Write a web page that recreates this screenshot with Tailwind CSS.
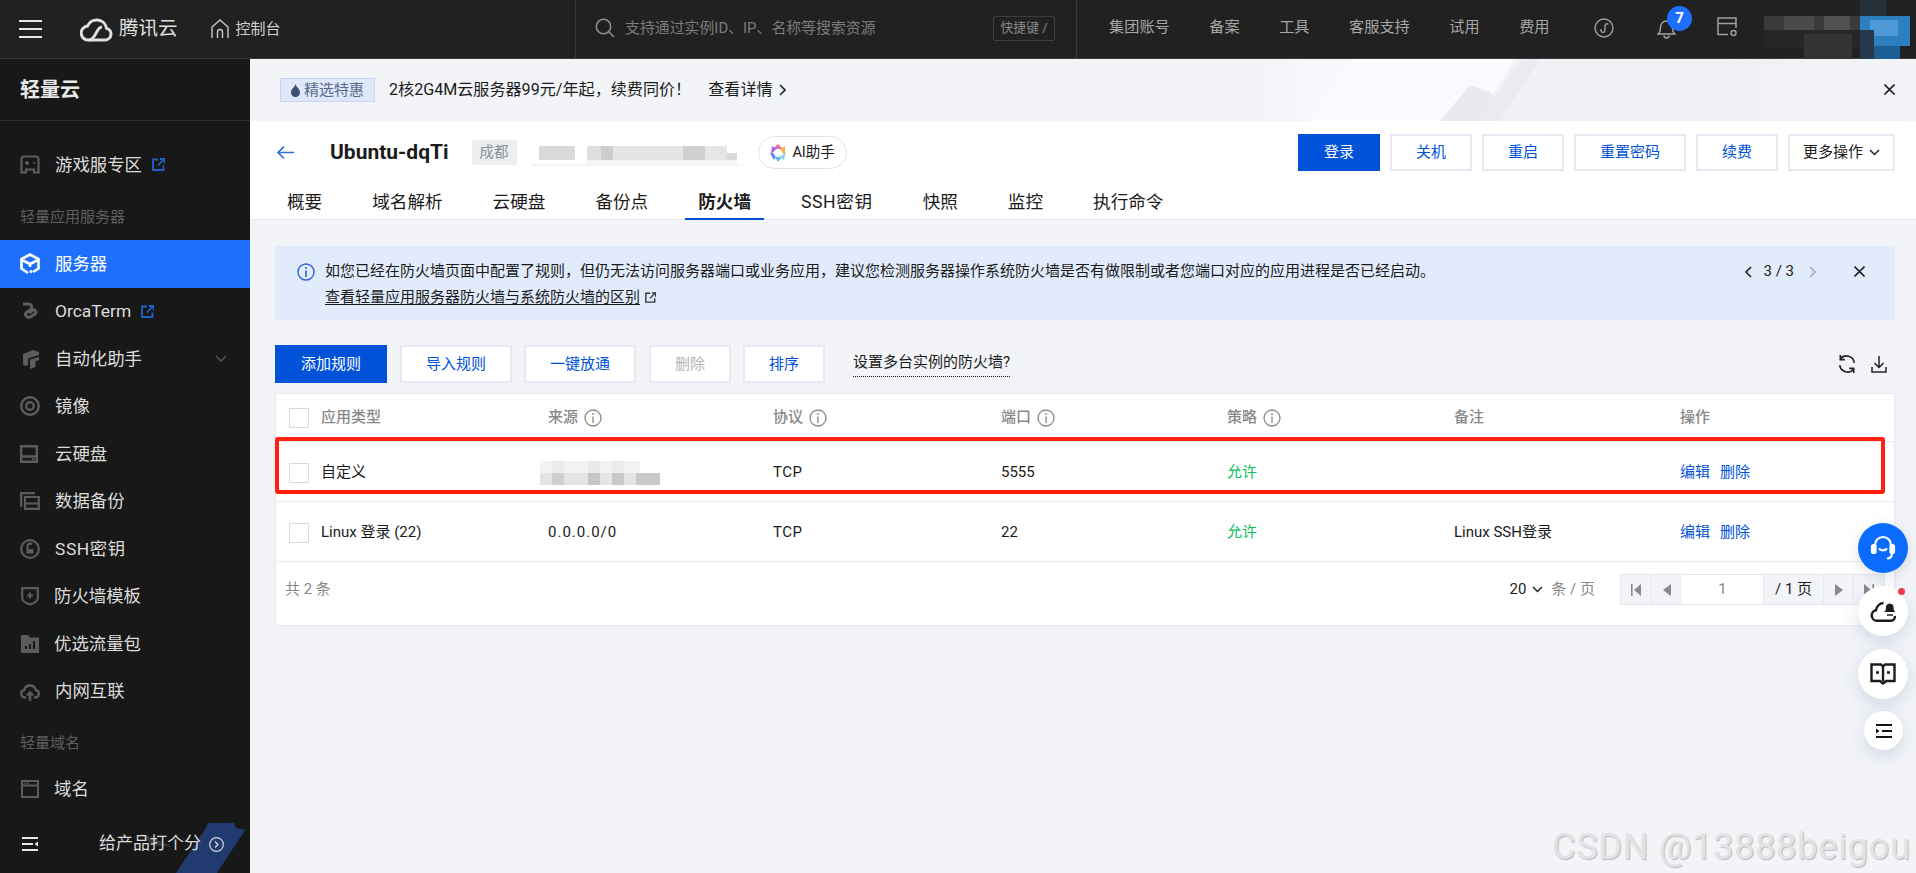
<!DOCTYPE html>
<html lang="zh-CN">
<head>
<meta charset="UTF-8" />
<title>轻量云 - 防火墙</title>
<script src="https://cdn.jsdelivr.net/npm/@tailwindcss/browser@4"></script>
</head>
<body class="bg-[#f2f4f8]">
<div class="relative flex h-[873px] w-[1916px] flex-col overflow-hidden font-['Roboto','Noto_Sans_CJK_SC',sans-serif] text-[15px] text-[#1b1b1b]">

  <!-- top bar -->
  <header class="relative flex h-[59px] shrink-0 items-center border-b border-[#3a3a3a] bg-[#212121] text-[#a6a6a6]">
    <div class="flex w-[575px] items-center">
      <svg class="ml-[19px] h-[18px] w-[23px]" viewBox="0 0 23 18" fill="#e8e8e8"><rect width="23" height="2"/><rect y="8" width="23" height="2"/><rect y="16" width="23" height="2"/></svg>
      <svg class="ml-[38px] h-[28px] w-[33px]" viewBox="0 0 33 28" fill="none" stroke="#e0e0e0" stroke-width="3"><path d="M9 25h16a6 6 0 0 0 1.500-11.800A10 10 0 0 0 7.500 11 7 7 0 0 0 9 25Z"/><path d="M9 25 C16 25 16 12 22 12"/></svg>
      <span class="ml-[6px] text-[19.500px] text-[#e0e0e0]">腾讯云</span>
      <svg class="ml-[33px] h-[20px] w-[18px]" viewBox="0 0 18 20" fill="none" stroke="#c8c8c8" stroke-width="1.400"><path d="M1 19V8L9 1l8 7v11"/><path d="M6.500 19v-6a2.500 2.500 0 0 1 5 0v6"/></svg>
      <span class="ml-[7px] text-[15px] text-[#d0d0d0]">控制台</span>
    </div>
    <div class="flex h-full w-[501px] items-center border-l border-[#3a3a3a] pb-[2px] pl-[19px]">
      <svg class="h-[20px] w-[20px]" viewBox="0 0 20 20" fill="none" stroke="#8c8c8c" stroke-width="1.600"><circle cx="8.500" cy="8.500" r="7.200"/><path d="m14 14 5 5"/></svg>
      <span class="ml-[10px] w-[368px] text-[14.900px] text-[#7c7c7c]">支持通过实例ID、IP、名称等搜索资源</span>
      <span class="flex h-[25px] w-[62px] items-center justify-center rounded-[2px] border border-[#3f3f3f] text-[12.800px] text-[#8a8a8a]">快捷键 /</span>
    </div>
    <nav class="flex h-full flex-1 items-center gap-[39.500px] border-l border-[#3a3a3a] pb-[3px] pl-[32px] text-[15.200px]">
      <span>集团账号</span><span>备案</span><span>工具</span><span>客服支持</span><span>试用</span><span>费用</span>
      <svg class="ml-[5px] h-[20px] w-[20px]" viewBox="0 0 20 20" fill="none" stroke="#a0a0a0" stroke-width="1.400"><circle cx="10" cy="10" r="9"/><path d="M7 11v1.500a2 2 0 0 0 3 1.600c1-.6 1-1.400 1-2.600V8.500c0-1.200.2-2 1-2.500a2 2 0 0 1 2.400.4"/></svg>
      <svg class="ml-[3px] h-[24px] w-[19px]" viewBox="0 0 19 24" fill="none" stroke="#a0a0a0" stroke-width="1.500"><path d="M1 18c2-1.500 2.500-3 2.500-7a6 6 0 0 1 12 0c0 4 .5 5.500 2.500 7Z"/><path d="M7 19.500a2.500 2.500 0 0 0 5 0"/></svg>
      <svg class="ml-[2px] h-[21px] w-[21px]" viewBox="0 0 21 21" fill="none" stroke="#a0a0a0" stroke-width="1.500"><path d="M11 17.500H1V1h18v10M1 6.500h18"/><circle cx="16.500" cy="16" r="2.500"/></svg>
    </nav>
    <span class="absolute left-[1667px] top-[6px] flex h-[25px] w-[25px] items-center justify-center rounded-full bg-[#1f6fff] text-[15px] font-bold text-white">7</span>
    <!-- blurred account name -->
    <svg class="absolute left-[1764px] top-0 h-[62px] w-[146px]" viewBox="0 0 146 62">
      <rect x="0" y="16" width="96" height="14" fill="#3a3a3a"/><rect x="20" y="16" width="30" height="14" fill="#4a4a4a"/><rect x="60" y="16" width="26" height="14" fill="#505050"/><rect x="0" y="30" width="96" height="18" fill="#262626"/><rect x="40" y="34" width="48" height="28" fill="#333"/>
      <rect x="96" y="0" width="26" height="16" fill="#263038"/><rect x="96" y="16" width="50" height="30" fill="#2e7fbf"/><rect x="106" y="20" width="28" height="16" fill="#4f9ad6"/><rect x="96" y="46" width="40" height="16" fill="#1d5f94"/><rect x="96" y="30" width="14" height="30" fill="#243a4c"/>
    </svg>
  </header>

  <div class="flex min-h-0 flex-1">
    <!-- sidebar -->
    <aside class="relative flex w-[250px] shrink-0 flex-col overflow-hidden bg-[#181818] text-[17.400px] text-[#dcdcdc]">
      <div class="flex h-[62px] shrink-0 items-center border-b border-[#2e2e2e] pl-[20px] text-[20px] font-bold text-[#e8e8e8]">轻量云</div>
      <div class="mt-[20px] flex h-[47.500px] shrink-0 items-center pl-[20px]">
        <svg class="h-[20px] w-[20px]" viewBox="0 0 20 20" fill="none" stroke="#5c5c5c" stroke-width="2.200"><path d="M4 1.500h12a2.500 2.500 0 0 1 2.500 2.500v13.500h-4.500v-3H6v3H1.500V4A2.500 2.500 0 0 1 4 1.500Z"/><path d="M5 8h4M7 6v4" stroke-width="1.800"/><circle cx="14" cy="8" r="1" fill="#5c5c5c" stroke="none"/></svg>
        <span class="ml-[15px]">游戏服专区</span>
        <svg class="ml-[10px] h-[13px] w-[13px]" viewBox="0 0 13 13" fill="none" stroke="#1f5fc9" stroke-width="1.800"><path d="M6 1.500H1v10.500h10.500V7.500"/><path d="M6 7.500 12 1M8 1h4.500v4.500"/></svg>
      </div>
      <div class="flex h-[51.500px] shrink-0 items-center pl-[20px] pt-[6px] text-[15px] text-[#5e5e5e]">轻量应用服务器</div>
      <div class="flex h-[47.500px] shrink-0 items-center bg-[#1f6fff] pl-[20px] text-white">
        <svg class="h-[22px] w-[20px]" viewBox="0 0 20 22" fill="none" stroke="#fff" stroke-width="2.600"><path d="M8 20 1.500 15.500V6L10 1.500 18.500 6v9.500L13 19"/><path d="m3 7.500 7 3.500 7-3.500M10 11v3"/><circle cx="11" cy="18.500" r="1.500" fill="#fff" stroke="none"/></svg>
        <span class="ml-[15px]">服务器</span>
      </div>
      <div class="flex h-[47.500px] shrink-0 items-center pl-[20px]">
        <svg class="h-[20px] w-[20px]" viewBox="0 0 20 20" fill="none" stroke="#5c5c5c" stroke-width="3"><path d="M3 3h5c4 0 5 4 2 6L7 11c-3 2-1 6 3 5l5-3c2-2 0-5-2-4l-4 3"/></svg>
        <span class="ml-[15px]">OrcaTerm</span>
        <svg class="ml-[10px] h-[13px] w-[13px]" viewBox="0 0 13 13" fill="none" stroke="#1f5fc9" stroke-width="1.800"><path d="M6 1.500H1v10.500h10.500V7.500"/><path d="M6 7.500 12 1M8 1h4.500v4.500"/></svg>
      </div>
      <div class="flex h-[47.500px] shrink-0 items-center pl-[22px]">
        <svg class="h-[20px] w-[17px]" viewBox="0 0 17 20" fill="#5c5c5c"><path d="M1 5 11 1l6 2v3L6 9.500V16l-3 1-2-1.500Z"/><path d="M8 10.500 17 8v3l-3.500 1.200V18L8 20Z"/></svg>
        <span class="ml-[16px]">自动化助手</span>
        <svg class="ml-[73px] h-[8px] w-[12px]" viewBox="0 0 12 8" fill="none" stroke="#5a5a5a" stroke-width="1.400"><path d="m1 1 5 5 5-5"/></svg>
      </div>
      <div class="flex h-[47.500px] shrink-0 items-center pl-[20px]">
        <svg class="h-[20px] w-[20px]" viewBox="0 0 20 20" fill="none" stroke="#5c5c5c" stroke-width="2.400"><circle cx="10" cy="10" r="8.800"/><circle cx="10" cy="10" r="3.800"/></svg>
        <span class="ml-[15px]">镜像</span>
      </div>
      <div class="flex h-[47.500px] shrink-0 items-center pl-[20px]">
        <svg class="h-[18px] w-[18px]" viewBox="0 0 18 18" fill="none" stroke="#5c5c5c" stroke-width="2.400"><path d="M1.200 1.200h15.600v15.600H1.200ZM1.200 11.500h15.600"/><path d="M12 14.200h2.500" stroke-width="1.600"/></svg>
        <span class="ml-[17px]">云硬盘</span>
      </div>
      <div class="flex h-[47.500px] shrink-0 items-center pl-[20px]">
        <svg class="h-[18px] w-[20px]" viewBox="0 0 20 18" fill="none" stroke="#5c5c5c" stroke-width="2.200"><path d="M15 1.200H1.200V15"/><path d="M5 5h13.800v11.800H5ZM5 11.500h13.800"/></svg>
        <span class="ml-[15px]">数据备份</span>
      </div>
      <div class="flex h-[47.500px] shrink-0 items-center pl-[20px]">
        <svg class="h-[20px] w-[20px]" viewBox="0 0 20 20" fill="none" stroke="#5c5c5c" stroke-width="2.200"><circle cx="10" cy="10" r="8.800"/><path d="M7.500 10V7a2.500 2.500 0 0 1 4.500-1.500"/><rect x="6.500" y="10" width="7" height="4.500" fill="#5c5c5c" stroke="none"/></svg>
        <span class="ml-[15px] tracking-[0.6px]">SSH密钥</span>
      </div>
      <div class="flex h-[47.500px] shrink-0 items-center pl-[21px]">
        <svg class="h-[19px] w-[18px]" viewBox="0 0 18 19" fill="none" stroke="#5c5c5c" stroke-width="2.200"><path d="M1.200 1.200h15.600v10c0 3-4 5-7.800 6.300C5 16.200 1.200 14.200 1.200 11.200Z"/><path d="M9 5.500v6M6 8.500h6"/></svg>
        <span class="ml-[15px]">防火墙模板</span>
      </div>
      <div class="flex h-[47.500px] shrink-0 items-center pl-[21px]">
        <svg class="h-[18px] w-[18px]" viewBox="0 0 18 18" fill="#5c5c5c"><path d="M0 0h7l2 2.500h9V18H0Z"/><path d="M4 11h2v3H4ZM8 9h2v5H8ZM12 6h2v8h-2Z" fill="#181818"/></svg>
        <span class="ml-[15px]">优选流量包</span>
      </div>
      <div class="flex h-[47.500px] shrink-0 items-center pl-[20px]">
        <svg class="h-[20px] w-[20px]" viewBox="0 0 20 20" fill="none" stroke="#5c5c5c" stroke-width="2.400"><path d="M6 16.500H5a3.800 3.800 0 0 1-.8-7.500A6 6 0 0 1 15.800 9 3.800 3.800 0 0 1 15 16.500h-1"/><path d="M10 20v-8M7 14.500l3-3 3 3"/></svg>
        <span class="ml-[15px]">内网互联</span>
      </div>
      <div class="flex h-[50px] shrink-0 items-center pl-[20px] pt-[6px] text-[15px] text-[#5e5e5e]">轻量域名</div>
      <div class="flex h-[47.500px] shrink-0 items-center pl-[21px]">
        <svg class="h-[18px] w-[18px]" viewBox="0 0 18 18" fill="none" stroke="#5c5c5c" stroke-width="2"><path d="M1 1h16v16H1ZM1 5.500h16"/><path d="M3.500 3.200h1.500M6.500 3.200H8" stroke-width="1.500"/></svg>
        <span class="ml-[15px]">域名</span>
      </div>
      <svg class="absolute bottom-0 left-[140px] h-[50px] w-[105px]" viewBox="0 0 105 50"><path d="M0 10 20 18 32 24 12 22Z" fill="#3a3a3a"/><path d="M36 50 66 5l2-5h26l2 5 9 2-28 43Z" fill="#213a70"/></svg>
      <div class="relative mt-auto flex h-[58px] shrink-0 items-center pl-[22px]">
        <svg class="h-[14px] w-[16px]" viewBox="0 0 16 14" fill="#e8e8e8"><rect width="16" height="2"/><rect y="6" width="11" height="2"/><rect y="12" width="16" height="2"/><path d="M16 4.500v5L12.500 7Z"/></svg>
        <span class="ml-[61px] text-[17px]">给产品打个分</span>
        <svg class="ml-[8px] h-[15px] w-[15px]" viewBox="0 0 15 15" fill="none" stroke="#d8d8d8" stroke-width="1.200"><circle cx="7.500" cy="7.500" r="6.800"/><path d="m6 4.500 3 3-3 3"/></svg>
      </div>
    </aside>

    <!-- content -->
    <main class="relative flex min-w-0 flex-1 flex-col">
      <!-- promo -->
      <div class="relative flex h-[62px] shrink-0 items-center overflow-hidden pl-[30px] text-[16.100px]">
        <svg class="absolute left-[1010px] top-0 h-[62px] w-[656px]" viewBox="0 0 656 62"><defs><linearGradient id="promo" x1="0" x2="1"><stop offset="0" stop-color="#f2f4f8"/><stop offset="0.1" stop-color="#f8f9fc"/><stop offset="0.35" stop-color="#f0f1f5"/><stop offset="0.7" stop-color="#eff1f5"/><stop offset="1" stop-color="#f2f4f8"/></linearGradient></defs><rect width="656" height="62" fill="url(#promo)"/><path d="M52 62 90 0h165l-38 62Z" fill="#f9fafd"/><path d="M180 62 210 26 232 34 240 62Z" fill="#e8eaee"/><path d="M218 62 262 0h18l-40 62Z" fill="#e9ebf0"/><path d="M260 62 300 0h120l-34 62Z" fill="#eef0f3"/></svg>
        <span class="relative flex h-[24px] w-[95px] items-center justify-center gap-[4px] border border-[#c9d6f8] bg-[#dfe7fb] text-[15px] text-[#58678c]">
          <svg class="h-[13px] w-[9px]" viewBox="0 0 9 13" fill="#3f4f78"><path d="M4.500 0C5 3 9 5 9 8.500a4.500 4.500 0 0 1-9 0C0 5 4 3 4.500 0Z"/></svg>精选特惠</span>
        <span class="relative ml-[14px]">2核2G4M云服务器99元/年起，续费同价！</span>
        <span class="relative ml-[17px] flex items-center gap-[6px]">查看详情
          <svg class="h-[12px] w-[7px]" viewBox="0 0 7 12" fill="none" stroke="#222" stroke-width="1.600"><path d="m1 1 5 5-5 5"/></svg></span>
        <svg class="absolute left-[1634px] top-[25px] h-[11px] w-[11px]" viewBox="0 0 11 11" stroke="#222" stroke-width="1.600"><path d="m.5.500 10 10M10.500.500l-10 10"/></svg>
      </div>

      <!-- instance header + tabs -->
      <div class="h-[99px] shrink-0 border-b border-[#e8eaf0] bg-white">
        <div class="flex h-[66px] items-center pb-[3px] pl-[27px]">
          <svg class="h-[13px] w-[17px]" viewBox="0 0 17 13" fill="none" stroke="#2f6fe0" stroke-width="1.600"><path d="M17 6.500H1M7 .7 1 6.500l6 5.800"/></svg>
          <span class="ml-[36px] text-[21px] font-bold">Ubuntu-dqTi</span>
          <span class="ml-[23px] flex h-[25px] w-[45px] items-center justify-center rounded-[2px] bg-[#eceef2] text-[14.500px] text-[#8a8f98]">成都</span>
          <svg class="ml-[15px] h-[27px] w-[212px]" viewBox="0 0 212 27"><path d="M0 26h212" stroke="#e8eaf0"/><rect x="7" y="7" width="36" height="14" fill="#d9d9d9"/><rect x="55" y="7" width="14" height="14" fill="#dedede"/><rect x="69" y="7" width="12" height="14" fill="#cdcdcd"/><rect x="81" y="7" width="70" height="14" fill="#e4e5e6"/><rect x="151" y="7" width="22" height="14" fill="#cfd0d2"/><rect x="173" y="7" width="22" height="14" fill="#e6e6e6"/><rect x="195" y="14" width="10" height="7" fill="#d9d9d9"/><rect x="55" y="21" width="150" height="4" fill="#f4f4f4"/></svg>
          <span class="ml-[14px] flex h-[33px] w-[89px] items-center justify-center gap-[5px] rounded-full border border-[#e0e4ef] text-[14.500px]">
            <svg class="h-[18px] w-[18px]" viewBox="0 0 18 18"><path d="M9 0 14 5H4Z" fill="#ec6aa6"/><path d="M3 2 2 10l6-5Z" fill="#9a6ae8"/><path d="M1 9l4 7 3-6Z" fill="#5a7ff0"/><path d="M9 18 5 12h9Z" fill="#62bdf6"/><path d="M15 16l2-8-6 5Z" fill="#8ad0f0"/><path d="M16 2l-6 4 6 5Z" fill="#f6b64c"/><circle cx="9" cy="9" r="4" fill="#fff"/></svg>AI助手</span>
          <div class="ml-auto flex gap-[10px] pr-[21px] text-[15px] text-[#0052d9]">
            <span class="flex h-[37px] w-[82px] items-center justify-center bg-[#0052d9] text-white">登录</span>
            <span class="flex h-[37px] w-[82px] items-center justify-center border-2 border-[#e6e9f2]">关机</span>
            <span class="flex h-[37px] w-[82px] items-center justify-center border-2 border-[#e6e9f2]">重启</span>
            <span class="flex h-[37px] w-[112px] items-center justify-center border-2 border-[#e6e9f2]">重置密码</span>
            <span class="flex h-[37px] w-[82px] items-center justify-center border-2 border-[#e6e9f2]">续费</span>
            <span class="flex h-[37px] w-[107px] items-center justify-center gap-[6px] border-2 border-[#e6e9f2] text-[#1b1b1b]">更多操作
              <svg class="h-[7px] w-[11px]" viewBox="0 0 11 7" fill="none" stroke="#222" stroke-width="1.500"><path d="m1 1 4.500 4.500L10 1"/></svg></span>
          </div>
        </div>
        <nav class="flex h-[32px] items-start gap-[50px] pl-[37px] text-[17.600px]">
          <span class="pt-[2px]">概要</span><span class="pt-[2px]">域名解析</span><span class="pt-[2px]">云硬盘</span><span class="pt-[2px]">备份点</span>
          <span class="-mx-[13px] h-[33px] border-b-2 border-[#0052d9] px-[13px] pt-[2px] font-bold">防火墙</span>
          <span class="pt-[2px] tracking-[0.6px]">SSH密钥</span><span class="pt-[2px]">快照</span><span class="pt-[2px]">监控</span><span class="pt-[2px]">执行命令</span>
        </nav>
      </div>

      <!-- tip -->
      <div class="mx-[25px] mt-[26px] h-[74px] w-[1620px] shrink-0 bg-[#e2ebfc] pl-[22px] pt-[13px]">
        <div class="flex h-[25px] items-center">
          <svg class="h-[18px] w-[18px] shrink-0" viewBox="0 0 18 18" fill="none" stroke="#2b62d9" stroke-width="1.400"><circle cx="9" cy="9" r="8"/><path d="M9 7.500V14" stroke-width="1.600"/><circle cx="9" cy="5" r="1" fill="#2b62d9" stroke="none"/></svg>
          <span class="ml-[10px]">如您已经在防火墙页面中配置了规则，但仍无法访问服务器端口或业务应用，建议您检测服务器操作系统防火墙是否有做限制或者您端口对应的应用进程是否已经启动。</span>
          <svg class="ml-auto h-[12px] w-[7px]" viewBox="0 0 7 12" fill="none" stroke="#222" stroke-width="1.600"><path d="M6 1 1 6l5 5"/></svg>
          <span class="ml-[12px]">3 / 3</span>
          <svg class="ml-[15px] h-[12px] w-[7px]" viewBox="0 0 7 12" fill="none" stroke="#a8aeb8" stroke-width="1.600"><path d="m1 1 5 5-5 5"/></svg>
          <svg class="ml-[38px] mr-[30px] h-[11px] w-[11px]" viewBox="0 0 11 11" stroke="#222" stroke-width="1.600"><path d="m.5.500 10 10M10.500.500l-10 10"/></svg>
        </div>
        <div class="ml-[28px] mt-[1px] flex h-[25px] items-center">
          <span class="underline underline-offset-2">查看轻量应用服务器防火墙与系统防火墙的区别</span>
          <svg class="ml-[5px] h-[11px] w-[11px]" viewBox="0 0 13 13" fill="none" stroke="#333" stroke-width="1.600"><path d="M6 1.500H1v10.500h10.500V7.500"/><path d="M6 7.500 12 1M8 1h4.500v4.500"/></svg>
        </div>
      </div>

      <!-- toolbar -->
      <div class="mx-[25px] mt-[25px] flex h-[38px] w-[1620px] shrink-0 items-center text-[#0052d9]">
        <span class="flex h-[38px] w-[112px] items-center justify-center bg-[#0052d9] text-white">添加规则</span>
        <span class="ml-[13px] flex h-[38px] w-[112px] items-center justify-center border-2 border-[#e6e9f2] bg-white">导入规则</span>
        <span class="ml-[12px] flex h-[38px] w-[112px] items-center justify-center border-2 border-[#e6e9f2] bg-white">一键放通</span>
        <span class="ml-[13px] flex h-[38px] w-[82px] items-center justify-center border-2 border-[#e6e9f2] bg-white text-[#b4b4b4]">删除</span>
        <span class="ml-[12px] flex h-[38px] w-[82px] items-center justify-center border-2 border-[#e6e9f2] bg-white">排序</span>
        <span class="ml-[28px] border-b border-dotted border-[#222] pb-[2px] text-[#1b1b1b]">设置多台实例的防火墙?</span>
        <svg class="ml-auto h-[20px] w-[20px]" viewBox="0 0 18 18" fill="none" stroke="#222" stroke-width="1.500"><path d="M15.500 8A7 7 0 0 0 3 4.500M2.500 10A7 7 0 0 0 15 13.500"/><path d="M3 1v4h4M15 17v-4h-4"/></svg>
        <svg class="ml-[14px] mr-[8px] h-[17px] w-[16px]" viewBox="0 0 16 17" fill="none" stroke="#222" stroke-width="1.500"><path d="M8 0v11M3.500 7 8 11.500 12.500 7M1 11v5h14v-5"/></svg>
      </div>

      <!-- table -->
      <div class="mx-[25px] mt-[10px] flex h-[232px] w-[1620px] shrink-0 flex-col border-x border-t border-[#e8eaf0] bg-white shadow-[0_1px_3px_rgba(0,0,0,0.04)]">
        <div class="grid h-[48px] shrink-0 grid-cols-[272px_225px_228px_226px_227px_226px_1fr] items-center border-b border-[#e8eaf0] font-medium text-[#888]">
          <div class="flex items-center pl-[13px]"><span class="h-[20px] w-[20px] border border-[#d6d9e0]"></span><span class="ml-[12px]">应用类型</span></div>
          <div class="flex items-center gap-[6px]">来源
            <svg class="h-[18px] w-[18px]" viewBox="0 0 18 18" fill="none" stroke="#888" stroke-width="1.300"><circle cx="9" cy="9" r="8"/><path d="M9 7.500V14"/><circle cx="9" cy="5" r=".9" fill="#888" stroke="none"/></svg></div>
          <div class="flex items-center gap-[6px]">协议
            <svg class="h-[18px] w-[18px]" viewBox="0 0 18 18" fill="none" stroke="#888" stroke-width="1.300"><circle cx="9" cy="9" r="8"/><path d="M9 7.500V14"/><circle cx="9" cy="5" r=".9" fill="#888" stroke="none"/></svg></div>
          <div class="flex items-center gap-[6px]">端口
            <svg class="h-[18px] w-[18px]" viewBox="0 0 18 18" fill="none" stroke="#888" stroke-width="1.300"><circle cx="9" cy="9" r="8"/><path d="M9 7.500V14"/><circle cx="9" cy="5" r=".9" fill="#888" stroke="none"/></svg></div>
          <div class="flex items-center gap-[6px]">策略
            <svg class="h-[18px] w-[18px]" viewBox="0 0 18 18" fill="none" stroke="#888" stroke-width="1.300"><circle cx="9" cy="9" r="8"/><path d="M9 7.500V14"/><circle cx="9" cy="5" r=".9" fill="#888" stroke="none"/></svg></div>
          <div>备注</div>
          <div>操作</div>
        </div>
        <div class="grid h-[60px] shrink-0 grid-cols-[272px_225px_228px_226px_227px_226px_1fr] items-center border-b border-[#e8eaf0] pt-[2px]">
          <div class="flex items-center pl-[13px]"><span class="h-[20px] w-[20px] border border-[#d6d9e0]"></span><span class="ml-[12px]">自定义</span></div>
          <div>
            <svg class="-ml-[8px] h-[24px] w-[120px]" viewBox="0 0 120 24"><rect width="100" height="12" fill="#f2f2f2"/><rect x="12" y="0" width="12" height="12" fill="#ebebeb"/><rect x="48" y="0" width="12" height="12" fill="#eaeaea"/><rect x="72" width="12" height="12" fill="#ececec"/><rect y="12" width="120" height="12" fill="#e4e4e4"/><rect x="12" y="12" width="12" height="12" fill="#cfcfcf"/><rect x="48" y="12" width="12" height="12" fill="#c6c6c6"/><rect x="72" y="12" width="12" height="12" fill="#c8c8c8"/><rect x="96" y="12" width="24" height="12" fill="#c9c9c9"/></svg>
          </div>
          <div class="tracking-[0.5px]">TCP</div>
          <div>5555</div>
          <div class="text-[#0abf5b]">允许</div>
          <div></div>
          <div class="flex gap-[10px] text-[#0052d9]"><span>编辑</span><span>删除</span></div>
        </div>
        <div class="grid h-[60px] shrink-0 grid-cols-[272px_225px_228px_226px_227px_226px_1fr] items-center border-b border-[#e8eaf0] pt-[2px]">
          <div class="flex items-center pl-[13px]"><span class="h-[20px] w-[20px] border border-[#d6d9e0]"></span><span class="ml-[12px]">Linux 登录 (22)</span></div>
          <div class="tracking-[1px]">0.0.0.0/0</div>
          <div class="tracking-[0.5px]">TCP</div>
          <div>22</div>
          <div class="text-[#0abf5b]">允许</div>
          <div>Linux SSH登录</div>
          <div class="flex gap-[10px] text-[#0052d9]"><span>编辑</span><span>删除</span></div>
        </div>
        <div class="flex flex-1 items-start pl-[9px] pt-[12px] text-[#888]">
          <span class="leading-[30px]">共 2 条</span>
          <span class="ml-auto flex h-[30px] items-center text-[#1b1b1b]">20
            <svg class="ml-[6px] h-[7px] w-[11px]" viewBox="0 0 11 7" fill="none" stroke="#222" stroke-width="1.500"><path d="m1 1 4.500 4.500L10 1"/></svg>
            <span class="ml-[8px] text-[#888]">条 / 页</span></span>
          <div class="ml-[25px] mr-[9px] flex h-[31px] border border-[#e4e7ee] bg-[#f2f4f8]">
            <span class="flex w-[31px] items-center justify-center border-r border-[#e4e7ee]"><svg class="h-[12px] w-[10px]" viewBox="0 0 10 12" fill="#8a8a8a"><rect width="1.600" height="12"/><path d="M10 0v12L3 6Z"/></svg></span>
            <span class="flex w-[30px] items-center justify-center"><svg class="h-[12px] w-[8px]" viewBox="0 0 8 12" fill="#8a8a8a"><path d="M8 0v12L0 6Z"/></svg></span>
            <span class="flex w-[81px] items-center justify-center bg-white">1</span>
            <span class="flex w-[61px] items-center justify-center border-x border-[#e4e7ee] text-[#1b1b1b]">/ 1 页</span>
            <span class="flex w-[30px] items-center justify-center border-r border-[#e4e7ee]"><svg class="h-[12px] w-[8px]" viewBox="0 0 8 12" fill="#8a8a8a"><path d="M0 0v12l8-6Z"/></svg></span>
            <span class="flex w-[30px] items-center justify-center"><svg class="h-[12px] w-[10px]" viewBox="0 0 10 12" fill="#8a8a8a"><path d="M0 0v12l7-6Z"/><rect x="8.400" width="1.600" height="12"/></svg></span>
          </div>
        </div>
      </div>

      <!-- red annotation box -->
      <div class="absolute left-[25px] top-[378px] h-[57px] w-[1610px] rounded-[3px] border-[4px] border-[#ff2012]"></div>
    </main>
  </div>

  <!-- floating buttons -->
  <div class="absolute left-[1858px] top-[523px] flex h-[50px] w-[50px] items-center justify-center rounded-full bg-[#0a6cff] shadow-[0_4px_14px_rgba(30,60,120,0.15)]">
    <svg class="h-[28px] w-[28px]" viewBox="0 0 28 28" fill="none" stroke="#fff" stroke-width="2.200"><path d="M6 14v-3a8 8 0 0 1 16 0v3"/><rect x="3" y="11" width="3.500" height="8" rx="1.500" fill="#fff"/><rect x="21.500" y="11" width="3.500" height="8" rx="1.500" fill="#fff"/><path d="M10 14.500c1.500 2.500 6 2.500 8 0"/><path d="M23 19c0 4-2 5.500-5 5.500"/></svg>
  </div>
  <div class="absolute left-[1858px] top-[586px] flex h-[50px] w-[50px] items-center justify-center rounded-full bg-white shadow-[0_6px_18px_rgba(30,60,120,0.15)]">
    <svg class="h-[22px] w-[26px]" viewBox="0 0 26 22" fill="none" stroke="#1c1c1c" stroke-width="2.400"><path d="M7 20.800h14a4 4 0 0 0 3.800-4.800"/><path d="M7 20.800a5.300 5.300 0 0 1-1-10.500A8 8 0 0 1 13.500 3"/><path d="M14 12c2-1 2-3 2-6a4 4 0 0 1 7.500 0c0 3 0 5 2 6Z" fill="#1c1c1c" stroke="none"/><path d="M17 15h6" stroke-width="1.500"/></svg>
  </div>
  <span class="absolute left-[1898px] top-[588px] h-[7px] w-[7px] rounded-full bg-[#e8404a]"></span>
  <div class="absolute left-[1858px] top-[649px] flex h-[50px] w-[50px] items-center justify-center rounded-full bg-white shadow-[0_6px_18px_rgba(30,60,120,0.15)]">
    <svg class="h-[22px] w-[26px]" viewBox="0 0 26 22" fill="none" stroke="#1c1c1c" stroke-width="2.400"><path d="M1.500 1.500h9.500l2 2 2-2h9.500v16.500h-8.500l-3 2.500-3-2.500H1.500Z"/><path d="M13 3.500v15"/><path d="M6 9.500h3M17 9.500h3" stroke-width="2.600"/></svg>
  </div>
  <div class="absolute left-[1864px] top-[711px] flex h-[39px] w-[39px] items-center justify-center rounded-full bg-white shadow-[0_6px_18px_rgba(30,60,120,0.15)]">
    <svg class="h-[14px] w-[16px]" viewBox="0 0 16 14" fill="#111"><rect width="16" height="2"/><rect x="6" y="6" width="10" height="2"/><rect y="12" width="16" height="2"/><path d="M0 4.500v5L3.500 7Z"/></svg>
  </div>

  <!-- watermark -->
  <span class="absolute left-[1552px] top-[820px] font-['Roboto',sans-serif] text-[36px] tracking-[0.8px] text-[#e2e3e6] [text-shadow:1px_1px_1px_#b8b8b8]">CSDN @13888beigou</span>
</div>
</body>
</html>
